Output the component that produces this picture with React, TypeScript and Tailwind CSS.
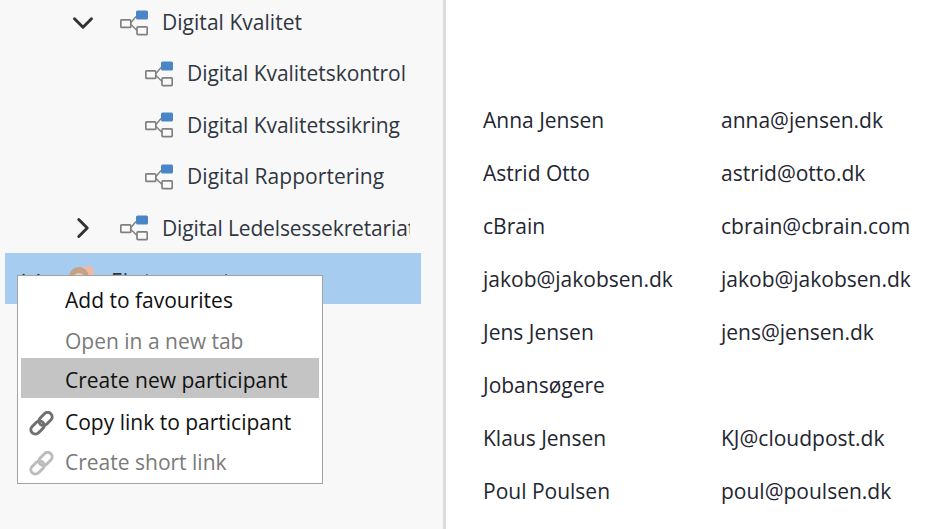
import React from "react";
import { ChevronDown, ChevronRight } from "lucide-react";

function OrgIcon() {
  return (
    <svg width="28" height="26" viewBox="0 0 28 26" className="shrink-0" fill="none">
      <rect x="16" y="0.5" width="12" height="9" rx="1.5" fill="#4a86c5" />
      <rect x="0.8" y="9.8" width="10" height="7.6" rx="1" stroke="#808080" strokeWidth="1.7" fill="#fafafa" />
      <rect x="17" y="16.8" width="10.2" height="7.8" rx="1" stroke="#808080" strokeWidth="1.7" fill="#fafafa" />
      <path d="M11 12.5 L16 6.5 M11 14.5 L17 20.5" stroke="#808080" strokeWidth="1.4" />
    </svg>
  );
}

function ChainIcon({ color }: { color: string }) {
  return (
    <svg width="25" height="25" viewBox="0 0 25 25" fill="none" className="shrink-0">
      <g stroke={color} strokeWidth="3">
        <rect x="-7.5" y="-4.5" width="15" height="9" rx="4.5" transform="translate(16.5 8) rotate(-45)" />
        <rect x="-7.5" y="-4.5" width="15" height="9" rx="4.5" transform="translate(8.5 16.5) rotate(-45)" />
      </g>
    </svg>
  );
}

function TreeRow({
  label,
  level,
  chevron,
  tracking,
}: {
  label: string;
  level: 1 | 2;
  chevron?: "down" | "right";
  tracking: string;
}) {
  return (
    <div className={`flex h-[51.4px] items-center ${level === 1 ? "pl-[70px]" : "pl-[145px]"}`}>
      {level === 1 && (
        <div className="flex w-[25px] shrink-0 justify-center">
          {chevron === "down" ? (
            <ChevronDown size={34} strokeWidth={2.1} className="shrink-0 text-[#333333]" />
          ) : (
            <ChevronRight size={34} strokeWidth={2.1} className="shrink-0 text-[#333333]" />
          )}
        </div>
      )}
      <div className={`flex min-w-0 items-center ${level === 1 ? "ml-[25px]" : ""}`}>
        <OrgIcon />
        <span className={`ml-[14px] overflow-hidden whitespace-nowrap text-[21px] text-[#2f3640] ${tracking}`}>
          {label}
        </span>
      </div>
    </div>
  );
}

function MenuItem({
  label,
  disabled,
  icon,
  className,
}: {
  label: string;
  disabled?: boolean;
  icon?: boolean;
  className: string;
}) {
  return (
    <div className={`flex items-center text-[21px] ${disabled ? "text-[#7a7a7a]" : "text-[#111111]"} ${className}`}>
      <div className="flex w-[44px] shrink-0 justify-center pr-[3px]">
        {icon && <ChainIcon color={disabled ? "#bcbcbc" : "#707070"} />}
      </div>
      <span className="whitespace-nowrap">{label}</span>
    </div>
  );
}

const people: [string, string][] = [
  ["Anna Jensen", "anna@jensen.dk"],
  ["Astrid Otto", "astrid@otto.dk"],
  ["cBrain", "cbrain@cbrain.com"],
  ["jakob@jakobsen.dk", "jakob@jakobsen.dk"],
  ["Jens Jensen", "jens@jensen.dk"],
  ["Jobansøgere", ""],
  ["Klaus Jensen", "KJ@cloudpost.dk"],
  ["Poul Poulsen", "poul@poulsen.dk"],
];

export default function App() {
  return (
    <div className="relative flex h-[529px] w-[941px] overflow-hidden bg-white font-['Open_Sans','Noto_Sans',sans-serif]">
      <div className="h-full w-[443px] shrink-0 bg-[#f8f8f8]">
        <div className="-mt-[3px] w-[410px]">
          <TreeRow label="Digital Kvalitet" level={1} chevron="down" tracking="tracking-[0.03px]" />
          <TreeRow label="Digital Kvalitetskontrol" level={2} tracking="tracking-[-0.05px]" />
          <TreeRow label="Digital Kvalitetssikring" level={2} tracking="tracking-[-0.05px]" />
          <TreeRow label="Digital Rapportering" level={2} tracking="tracking-[0.05px]" />
          <TreeRow label="Digital Ledelsessekretariat" level={1} chevron="right" tracking="tracking-[-0.15px]" />
        </div>
        <div className="-mt-[1px] ml-[5px] flex h-[51px] w-[416px] items-center bg-[#a6cdf0] text-[21px] text-[#2f3640]">
          <ChevronDown size={30} strokeWidth={2.1} className="mt-[1px] ml-[11px] shrink-0 text-[#333333]" />
          <svg width="26" height="26" viewBox="0 0 26 26" className="ml-[22px] shrink-0">
            <circle cx="19" cy="10" r="9" fill="#efb9a4" />
            <circle cx="11" cy="12" r="10" fill="#c4a283" />
            <circle cx="11" cy="14" r="6" fill="#dcd2c6" />
          </svg>
          <span className="ml-[17px] mt-[6px] whitespace-nowrap">Ekstern part</span>
        </div>
      </div>
      <div className="h-full w-[3px] shrink-0 bg-[#dcdcdc]" />
      <div className="flex-1 pl-[37px] pt-[94px]">
        {people.map(([name, mail]) => (
          <div key={name} className="flex h-[53px] items-center text-[21px] text-[#1f2630]">
            <div className="w-[238px] shrink-0 whitespace-nowrap">{name}</div>
            <div className="whitespace-nowrap">{mail}</div>
          </div>
        ))}
      </div>

      <div className="absolute left-[17px] top-[275px] h-[209px] w-[306px] border border-[#a3a3a3] bg-white px-[3px] pt-[4px]">
        <MenuItem label="Add to favourites" className="h-[40px] pt-[2px]" />
        <MenuItem label="Open in a new tab" disabled className="h-[38px] pt-[6px]" />
        <MenuItem label="Create new participant" className="h-[40px] bg-[#c4c4c4] pt-[6px]" />
        <MenuItem label="Copy link to participant" icon className="mt-[4px] h-[40px] pt-[2px]" />
        <MenuItem label="Create short link" disabled icon className="h-[40px] pt-[2px]" />
      </div>
    </div>
  );
}
